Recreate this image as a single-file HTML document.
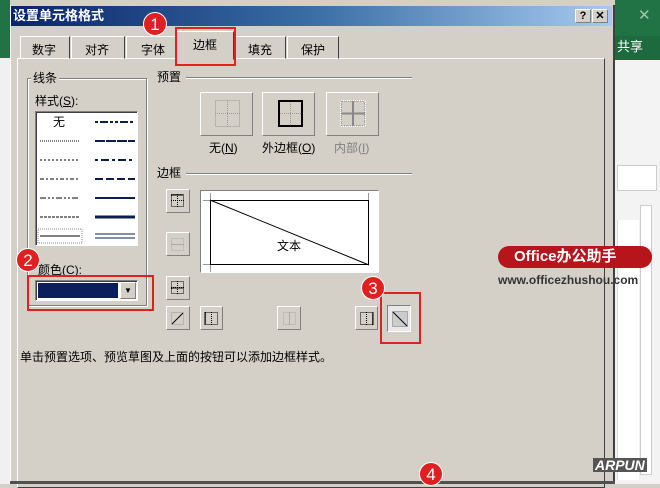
<!DOCTYPE html>
<html><head><meta charset="utf-8"><style>
*{margin:0;padding:0;box-sizing:border-box}
body{width:660px;height:484px;overflow:hidden;background:#d4d0c8;position:relative;font-family:"Liberation Sans","Noto Sans CJK SC",sans-serif;font-size:12px;color:#000}
.a{position:absolute}
.btn{position:absolute;background:#d4d0c8;border:1px solid;border-color:#fff #808080 #808080 #fff}
.t{position:absolute;white-space:nowrap;font-size:12px;line-height:14px}
.badge{position:absolute;width:24px;height:24px;border-radius:12px;background:#e02020;color:#fff;font-size:17px;line-height:24px;text-align:center;border:1px solid #fff;font-family:"Liberation Sans",sans-serif}
.red{position:absolute;border:2px solid #d22}
.ln{position:absolute;height:0}
</style></head><body>
<div class="a" style="left:0;top:0;width:10px;height:484px;background:#f0f0f0"></div>
<div class="a" style="left:0;top:0;width:10px;height:58px;background:#217346"></div>
<div class="a" style="left:615px;top:0;width:45px;height:484px;background:#f3f3f3"></div>
<div class="a" style="left:615px;top:0;width:45px;height:36px;background:#217346"></div>
<div class="t" style="left:638px;top:9px;color:#9fc7b0;font-size:15px">✕</div>
<div class="a" style="left:615px;top:36px;width:45px;height:24px;background:#1c6a3d"></div>
<div class="t" style="left:617px;top:40px;color:#fff;font-size:13px">共享</div>
<div class="a" style="left:617px;top:165px;width:40px;height:26px;border:1px solid #ccc;background:#fff"></div>
<div class="a" style="left:640px;top:205px;width:12px;height:270px;border:1px solid #ccc;background:#fff"></div>
<div class="a" style="left:617px;top:220px;width:22px;height:260px;background:#fff;border-left:1px solid #ddd"></div>
<div class="a" style="left:10px;top:5px;width:605px;height:479px;background:#d4d0c8;border-left:1px solid #fff;border-right:2px solid #404040"></div>
<div class="a" style="left:11px;top:6px;width:601px;height:20px;background:linear-gradient(90deg,#0a246a,#3a6ea5 50%,#a6caf0)"></div>
<div class="t" style="left:13px;top:9px;color:#fff;font-weight:bold;font-size:13px">设置单元格格式</div>
<div class="btn" style="left:575px;top:9px;width:16px;height:14px;font-weight:bold;font-size:11px;line-height:12px;text-align:center">?</div>
<div class="btn" style="left:592px;top:9px;width:16px;height:14px;font-weight:bold;font-size:11px;line-height:12px;text-align:center">✕</div>
<div class="a" style="left:17px;top:58px;width:588px;height:430px;border:1px solid;border-color:#fff #404040 #404040 #fff"></div>
<div class="a" style="left:20px;top:36px;width:50px;height:23px;border:1px solid;border-color:#fff #404040 transparent #fff"></div><div class="t" style="left:32px;top:43px">数字</div>
<div class="a" style="left:71px;top:36px;width:54px;height:23px;border:1px solid;border-color:#fff #404040 transparent #fff"></div><div class="t" style="left:85px;top:43px">对齐</div>
<div class="a" style="left:126px;top:36px;width:50px;height:23px;border:1px solid;border-color:#fff #404040 transparent #fff"></div><div class="t" style="left:141px;top:43px">字体</div>
<div class="a" style="left:176px;top:31px;width:58px;height:29px;border:1px solid;border-color:#fff #404040 transparent #fff;background:#d4d0c8"></div><div class="t" style="left:193px;top:38px">边框</div>
<div class="a" style="left:234px;top:36px;width:52px;height:23px;border:1px solid;border-color:#fff #404040 transparent #fff"></div><div class="t" style="left:248px;top:43px">填充</div>
<div class="a" style="left:287px;top:36px;width:52px;height:23px;border:1px solid;border-color:#fff #404040 transparent #fff"></div><div class="t" style="left:301px;top:43px">保护</div>
<div class="red" style="left:175px;top:27px;width:61px;height:39px"></div>
<div class="badge" style="left:143px;top:12px">1</div>
<div class="a" style="left:27px;top:78px;width:120px;height:228px;border:1px solid #808080;box-shadow:1px 1px 0 #fff inset,1px 1px 0 #fff"></div>
<div class="t" style="left:31px;top:71px;background:#d4d0c8;padding:0 2px">线条</div>
<div class="t" style="left:35px;top:94px">样式(<u>S</u>):</div>
<div class="a" style="left:35px;top:111px;width:103px;height:135px;background:#fff;border:1px solid;border-color:#808080 #fff #fff #808080;box-shadow:1px 1px 0 #404040 inset"></div>
<div class="t" style="left:53px;top:115px">无</div>
<svg class="a" style="left:35px;top:111px" width="103" height="135">
<g stroke="#000" stroke-width="1">
<line x1="5" y1="30" x2="45" y2="30" stroke-dasharray="1 1"/>
<line x1="5" y1="49" x2="45" y2="49" stroke-dasharray="2 2"/>
<line x1="5" y1="68" x2="45" y2="68" stroke-dasharray="4 2 2 2"/>
<line x1="5" y1="87" x2="45" y2="87" stroke-dasharray="6 2 2 2 2 2"/>
<line x1="5" y1="106" x2="45" y2="106" stroke-dasharray="3 1"/>
<line x1="5" y1="125" x2="45" y2="125"/>
</g>
<rect x="3" y="118" width="44" height="14" fill="none" stroke="#888" stroke-dasharray="1 1"/>
<g stroke="#0a1f4f">
<line x1="60" y1="11" x2="100" y2="11" stroke-width="2" stroke-dasharray="3 2 8 2 3 2"/>
<line x1="60" y1="30" x2="100" y2="30" stroke-width="2" stroke-dasharray="10 1"/>
<line x1="60" y1="49" x2="100" y2="49" stroke-width="2" stroke-dasharray="3 3 8 3"/>
<line x1="60" y1="68" x2="100" y2="68" stroke-width="2" stroke-dasharray="8 3"/>
<line x1="60" y1="87" x2="100" y2="87" stroke-width="2"/>
<line x1="60" y1="106" x2="100" y2="106" stroke-width="3"/>
<line x1="60" y1="123" x2="100" y2="123" stroke-width="1"/>
<line x1="60" y1="127" x2="100" y2="127" stroke-width="1"/>
</g></svg>
<div class="t" style="left:38px;top:263px">颜色(C):</div>
<div class="a" style="left:35px;top:280px;width:103px;height:21px;background:#fff;border:1px solid;border-color:#808080 #fff #fff #808080;box-shadow:1px 1px 0 #404040 inset"></div>
<div class="a" style="left:38px;top:283px;width:80px;height:15px;background:#0a1f5c"></div>
<div class="btn" style="left:120px;top:282px;width:16px;height:17px;font-size:8px;text-align:center;line-height:15px">▼</div>
<div class="red" style="left:27px;top:275px;width:127px;height:36px"></div>
<div class="badge" style="left:16px;top:248px">2</div>
<div class="t" style="left:157px;top:70px">预置</div>
<div class="ln" style="left:186px;top:77px;width:226px;border-top:1px solid #808080;border-bottom:1px solid #fff"></div>
<div class="btn" style="left:200px;top:92px;width:53px;height:44px"></div>
<div class="btn" style="left:262px;top:92px;width:53px;height:44px"></div>
<div class="btn" style="left:326px;top:92px;width:53px;height:44px"></div>
<svg class="a" style="left:200px;top:92px" width="180" height="44">
<g fill="none" stroke="#999" stroke-dasharray="1 1"><rect x="15.5" y="8.5" width="24" height="26"/><line x1="27.5" y1="8" x2="27.5" y2="35"/><line x1="15" y1="21.5" x2="40" y2="21.5"/></g>
<rect x="79" y="9" width="23" height="25" fill="none" stroke="#000" stroke-width="2"/>
<g stroke="#999" stroke-dasharray="1 1"><line x1="90.5" y1="10" x2="90.5" y2="33"/><line x1="80" y1="21.5" x2="101" y2="21.5"/></g>
<g fill="none" stroke="#fff" stroke-dasharray="1 1" stroke-width="2"><rect x="141" y="9" width="24" height="25"/></g>
<g fill="none" stroke="#999" stroke-dasharray="2 1"><rect x="141.5" y="9.5" width="23" height="24"/></g>
<g stroke="#888" stroke-width="2"><line x1="153" y1="9" x2="153" y2="34"/><line x1="141" y1="21.5" x2="165" y2="21.5"/></g>
</svg>
<div class="t" style="left:209px;top:141px">无(<u>N</u>)</div>
<div class="t" style="left:262px;top:141px">外边框(<u>O</u>)</div>
<div class="t" style="left:334px;top:141px;color:#808080">内部(<u>I</u>)</div>
<div class="t" style="left:157px;top:166px">边框</div>
<div class="ln" style="left:186px;top:173px;width:226px;border-top:1px solid #808080;border-bottom:1px solid #fff"></div>
<div class="btn" style="left:166px;top:189px;width:24px;height:24px"></div>
<div class="btn" style="left:166px;top:232px;width:24px;height:24px"></div>
<div class="btn" style="left:166px;top:276px;width:24px;height:24px"></div>
<div class="btn" style="left:166px;top:306px;width:24px;height:24px"></div>
<div class="btn" style="left:200px;top:306px;width:23px;height:24px"></div>
<div class="btn" style="left:277px;top:306px;width:24px;height:24px"></div>
<div class="btn" style="left:355px;top:306px;width:23px;height:24px"></div>
<div class="a" style="left:387px;top:305px;width:24px;height:27px;background:#e8e8e8;border:1px solid;border-color:#808080 #fff #fff #808080"></div>
<svg class="a" style="left:160px;top:185px" width="260" height="150">
<g fill="none" stroke="#000" stroke-dasharray="1 1">
<rect x="11.5" y="9.5" width="12" height="12"/><line x1="17.5" y1="9" x2="17.5" y2="22"/><line x1="11" y1="15.5" x2="24" y2="15.5"/>
<rect x="11.5" y="96.5" width="12" height="12"/><line x1="17.5" y1="96" x2="17.5" y2="109"/><line x1="11" y1="102.5" x2="24" y2="102.5"/>
<rect x="45.5" y="127.5" width="12" height="12"/><line x1="51.5" y1="127" x2="51.5" y2="140"/>
<rect x="200.5" y="127.5" width="12" height="12"/><line x1="206.5" y1="127" x2="206.5" y2="140"/>
</g>
<g stroke="#000"><line x1="11" y1="10" x2="24" y2="10"/><line x1="11" y1="103" x2="24" y2="103" /><line x1="45" y1="127" x2="45" y2="140"/><line x1="213" y1="127" x2="213" y2="140"/></g>
<g fill="none" stroke="#aaa" stroke-dasharray="1 1"><rect x="11.5" y="53.5" width="12" height="12"/><rect x="123.5" y="127.5" width="12" height="12"/></g>
<g stroke="#aaa"><line x1="11" y1="59.5" x2="24" y2="59.5"/><line x1="129.5" y1="127" x2="129.5" y2="140"/></g>
<rect x="11.5" y="127.5" width="12" height="12" fill="none" stroke="#999" stroke-dasharray="1 1"/>
<line x1="12" y1="139" x2="23" y2="128" stroke="#000"/>
<rect x="232.5" y="126.5" width="15" height="15" fill="#ccc" stroke="#777" stroke-dasharray="1 1"/>
<line x1="233" y1="127" x2="247" y2="141" stroke="#000"/>
</svg>
<div class="a" style="left:200px;top:190px;width:179px;height:83px;background:#fff;border:1px solid;border-color:#808080 #fff #fff #808080"></div>
<svg class="a" style="left:200px;top:190px" width="180" height="84">
<rect x="10.5" y="10.5" width="158" height="64" fill="none" stroke="#000"/>
<g stroke="#999"><line x1="10.5" y1="3" x2="10.5" y2="10"/><line x1="3" y1="10.5" x2="10" y2="10.5"/><line x1="168.5" y1="3" x2="168.5" y2="10"/><line x1="3" y1="74.5" x2="10" y2="74.5"/><line x1="10.5" y1="75" x2="10.5" y2="82"/></g>
<line x1="10" y1="10" x2="169" y2="75" stroke="#000"/>
</svg>
<div class="t" style="left:277px;top:239px">文本</div>
<div class="red" style="left:380px;top:292px;width:41px;height:52px"></div>
<div class="badge" style="left:361px;top:276px">3</div>
<div class="t" style="left:20px;top:350px">单击预置选项、预览草图及上面的按钮可以添加边框样式。</div>
<div class="a" style="left:10px;top:481px;width:605px;height:3px;background:#505050"></div>
<div class="badge" style="left:419px;top:462px">4</div>
<div class="a" style="left:498px;top:246px;width:154px;height:22px;border-radius:11px;background:#b8141c"></div>
<div class="t" style="left:514px;top:249px;color:#fff;font-weight:bold;font-size:15px;line-height:16px">Office办公助手</div>
<div class="t" style="left:498px;top:273px;color:#333;font-weight:bold;font-size:12px">www.officezhushou.com</div>
<div class="t" style="left:593px;top:458px;color:#fff;font-weight:bold;font-style:italic;font-size:14px;background:#555;padding:0 2px">ARPUN</div>
</body></html>
